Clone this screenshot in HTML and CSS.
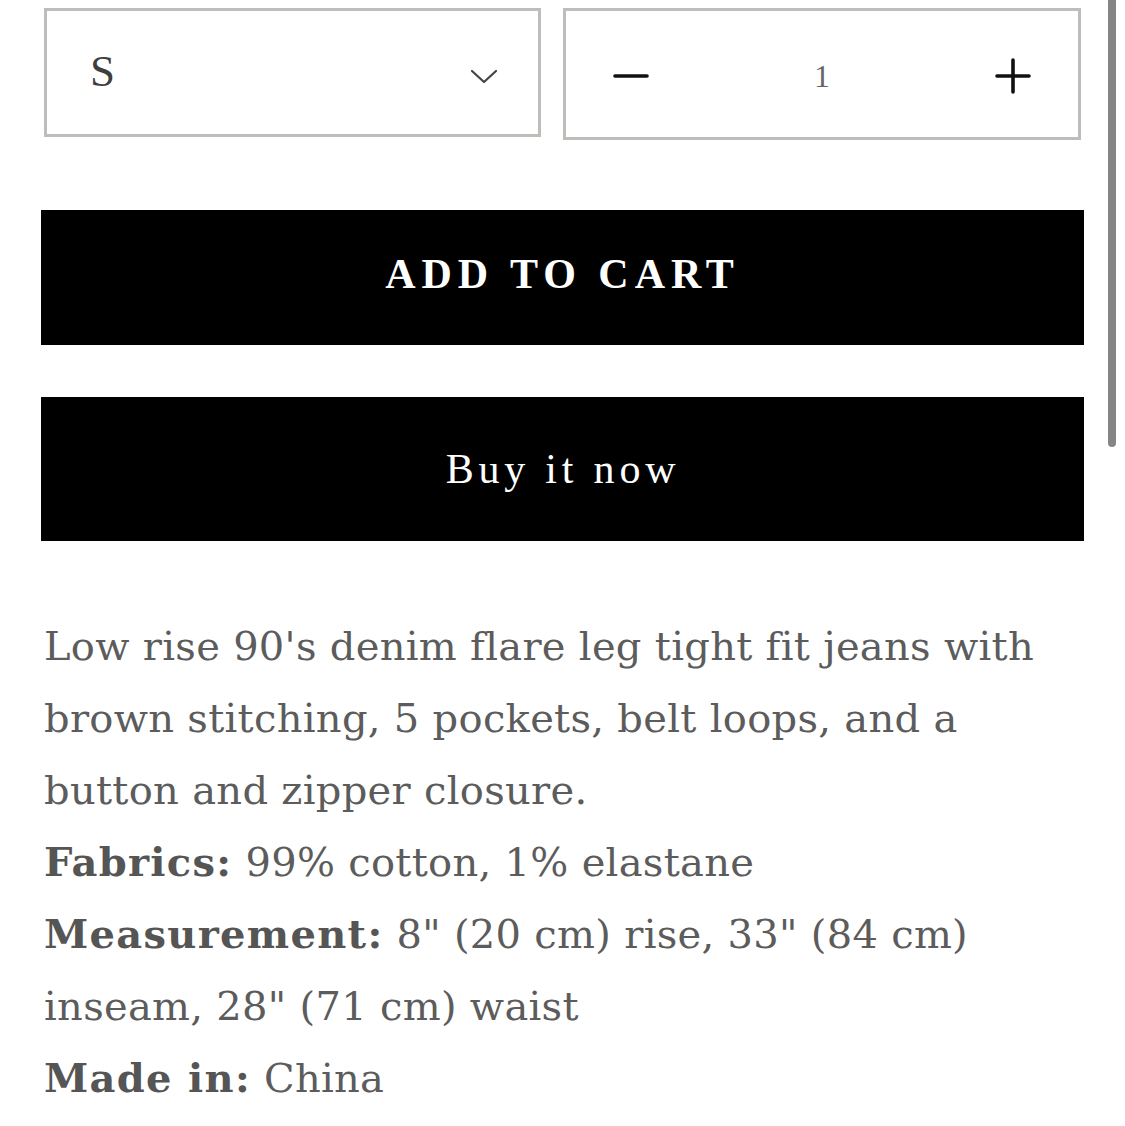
FILE: index.html
```html
<!DOCTYPE html>
<html lang="en">
<head>
<meta charset="utf-8">
<title>Product</title>
<link rel="stylesheet" href="styles.css">
</head>
<body>
<div class="page">
  <div class="options">
    <div class="select">
      <span class="select-value">S</span>
      <svg class="chevron" width="28" height="16" viewBox="0 0 28 16" aria-hidden="true">
        <path d="M2 2 L14 13 L26 2" fill="none" stroke="#444" stroke-width="2.2" stroke-linecap="round" stroke-linejoin="round"/>
      </svg>
    </div>
    <div class="qty">
      <svg class="qty-btn" width="36" height="36" viewBox="0 0 36 36" aria-hidden="true">
        <path d="M2 18 H34" stroke="#111" stroke-width="3.6" stroke-linecap="round"/>
      </svg>
      <span class="qty-value">1</span>
      <svg class="qty-btn" width="36" height="36" viewBox="0 0 36 36" aria-hidden="true">
        <path d="M2 18 H34 M18 2 V34" stroke="#111" stroke-width="3.6" stroke-linecap="round"/>
      </svg>
    </div>
  </div>
  <button class="btn btn-cart">ADD TO CART</button>
  <button class="btn btn-buy">Buy it now</button>
  <div class="desc">
    <p>Low rise 90's denim flare leg tight fit jeans with brown stitching, 5 pockets, belt loops, and a button and zipper closure.</p>
    <p><strong>Fabrics:</strong> 99% cotton, 1% elastane</p>
    <p><strong>Measurement:</strong> 8" (20 cm) rise, 33" (84 cm) inseam, 28" (71 cm) waist</p>
    <p><strong>Made in:</strong> China</p>
  </div>
</div>
<div class="scrollbar"></div>
</body>
</html>
```
FILE: styles.css
```css
html, body {
  margin: 0;
  padding: 0;
  background: #fff;
}
body {
  font-family: "DejaVu Serif", "Liberation Serif", serif;
  overflow: hidden;
}
.page {
  padding: 8px 0 0 41px;
  width: 1043px;
}
.options {
  display: flex;
  gap: 22px;
  padding: 0 3px;
  align-items: flex-start;
}
.select {
  box-sizing: border-box;
  width: 497px;
  height: 129px;
  border: 3px solid #bdbdb9;
  display: flex;
  align-items: center;
  justify-content: space-between;
  padding: 0 40px 0 43px;
}
.select-value {
  font-family: "Liberation Serif", serif;
  font-size: 45px;
  color: #3e3e3e;
  line-height: 1;
  margin-top: -2px;
}
.chevron {
  margin-top: 8px;
}
.qty {
  box-sizing: border-box;
  flex: 1;
  height: 132px;
  border: 3px solid #bdbdb9;
  display: flex;
  align-items: center;
  justify-content: space-between;
  padding: 0 47px 0 47px;
}
.qty-btn {
  display: block;
  margin-top: 4px;
}
.qty-value {
  font-family: "Liberation Serif", serif;
  font-size: 32px;
  color: #666;
  margin-top: 4px;
}
.btn {
  display: flex;
  align-items: center;
  justify-content: center;
  width: 1043px;
  margin: 0;
  border: 0;
  background: #000;
  color: #fff;
  font-family: "Liberation Serif", serif;
  font-size: 42px;
  cursor: pointer;
}
.btn-cart {
  margin-top: 70px;
  height: 135px;
  font-weight: bold;
  letter-spacing: 6px;
  padding: 0 0 8px 0;
}
.btn-buy {
  margin-top: 52px;
  height: 144px;
  letter-spacing: 4.8px;
  padding: 0 0 0 1px;
}
.desc {
  margin-top: 69px;
  padding-left: 3px;
  width: 1040px;
  color: #5c5c5c;
  font-size: 40px;
  line-height: 72px;
  letter-spacing: 0.3px;
}
.desc p {
  margin: 0;
}
.desc strong {
  font-weight: bold;
  letter-spacing: 1.3px;
  color: #555;
}
.scrollbar {
  position: absolute;
  top: 0;
  left: 1108px;
  width: 8px;
  height: 447px;
  background: #858585;
  border-radius: 0 0 4px 4px;
}
```
